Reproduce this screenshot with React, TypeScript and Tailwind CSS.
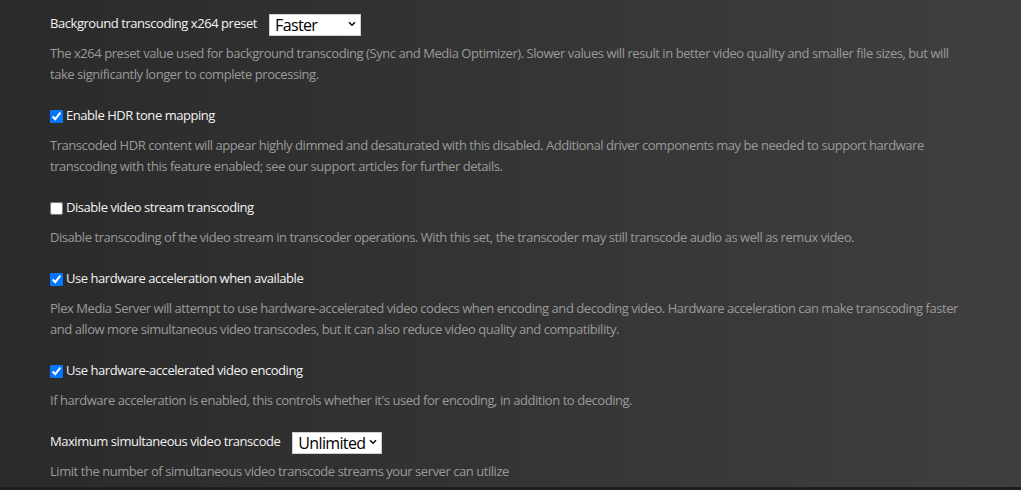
import { useState } from "react"

type Row = {
    kind: "select" | "check"
    label: string
    desc: string
    checked?: boolean
    options?: string[]
    value?: string
    selectW?: string
}

const rows: Row[] = [
    {
        kind: "select",
        label: "Background transcoding x264 preset",
        desc: "The x264 preset value used for background transcoding (Sync and Media Optimizer). Slower values will result in better video quality and smaller file sizes, but will take significantly longer to complete processing.",
        options: ["Very fast", "Faster", "Fast", "Medium", "Slow", "Slower"],
        value: "Faster",
        selectW: "w-[92px]",
    },
    {
        kind: "check",
        label: "Enable HDR tone mapping",
        desc: "Transcoded HDR content will appear highly dimmed and desaturated with this disabled. Additional driver components may be needed to support hardware transcoding with this feature enabled; see our support articles for further details.",
        checked: true,
    },
    {
        kind: "check",
        label: "Disable video stream transcoding",
        desc: "Disable transcoding of the video stream in transcoder operations. With this set, the transcoder may still transcode audio as well as remux video.",
        checked: false,
    },
    {
        kind: "check",
        label: "Use hardware acceleration when available",
        desc: "Plex Media Server will attempt to use hardware-accelerated video codecs when encoding and decoding video. Hardware acceleration can make transcoding faster and allow more simultaneous video transcodes, but it can also reduce video quality and compatibility.",
        checked: true,
    },
    {
        kind: "check",
        label: "Use hardware-accelerated video encoding",
        desc: "If hardware acceleration is enabled, this controls whether it's used for encoding, in addition to decoding.",
        checked: true,
    },
    {
        kind: "select",
        label: "Maximum simultaneous video transcode",
        desc: "Limit the number of simultaneous video transcode streams your server can utilize",
        options: ["Unlimited", "1", "2", "3", "4"],
        value: "Unlimited",
        selectW: "w-[90px]",
    },
]

const Setting = ({ row }: { row: Row }) => {
    const [checked, setChecked] = useState(!!row.checked)
    const [value, setValue] = useState(row.value)

    return (
        <div className="flex flex-col">
            {row.kind === "select" ? (
                <div className="flex flex-row items-center h-[22px] gap-x-3">
                    <span className="text-[13px] tracking-[-0.45px] text-[#f2f2f2]">{row.label}</span>
                    <div className={`relative ${row.selectW} h-[22px]`}>
                        <select
                            value={value}
                            onChange={e => setValue(e.target.value)}
                            className="appearance-none w-full h-full bg-white text-black text-[16px] tracking-[-0.65px] leading-none pl-[5px] pr-[10px] border border-[#d0d0d0] outline-none"
                        >
                            {row.options!.map(o => <option key={o} value={o}>{o}</option>)}
                        </select>
                        {/* chevron */}
                        <svg className="absolute right-[5px] top-[8px] pointer-events-none" width="8" height="6" viewBox="0 0 8 6">
                            <path d="M1 1.2 L4 4.2 L7 1.2" fill="none" stroke="#111" strokeWidth="1.6" />
                        </svg>
                    </div>
                </div>
            ) : (
                <label className="flex flex-row items-center h-[22px] gap-x-[3px]">
                    <input
                        type="checkbox"
                        checked={checked}
                        onChange={e => setChecked(e.target.checked)}
                        className="m-0 h-[13px] w-[13px]"
                    />
                    <span className="text-[13px] tracking-[-0.45px] text-[#f2f2f2]">{row.label}</span>
                </label>
            )}
            <p className="mt-[8px] text-[13px] tracking-[-0.45px] leading-[21px] text-[#9a9a9a]">{row.desc}</p>
        </div>
    )
}

const App = () => {
    return (
        <div
            className="w-[1021px] h-[490px] overflow-hidden flex flex-col bg-gradient-to-r from-[#2a2a2a] to-[#3f3f3f]"
            style={{ fontFamily: '"Open Sans", "Noto Sans", sans-serif' }}
        >
            <section className="flex-1 flex flex-col gap-y-[20px] pt-[13px] pl-[50px] pr-[51px]">
                {rows.map(r => <Setting key={r.label} row={r} />)}
            </section>
            <div className="h-[3px] bg-[#1e1e1e]" />
        </div>
    )
}

export default App
